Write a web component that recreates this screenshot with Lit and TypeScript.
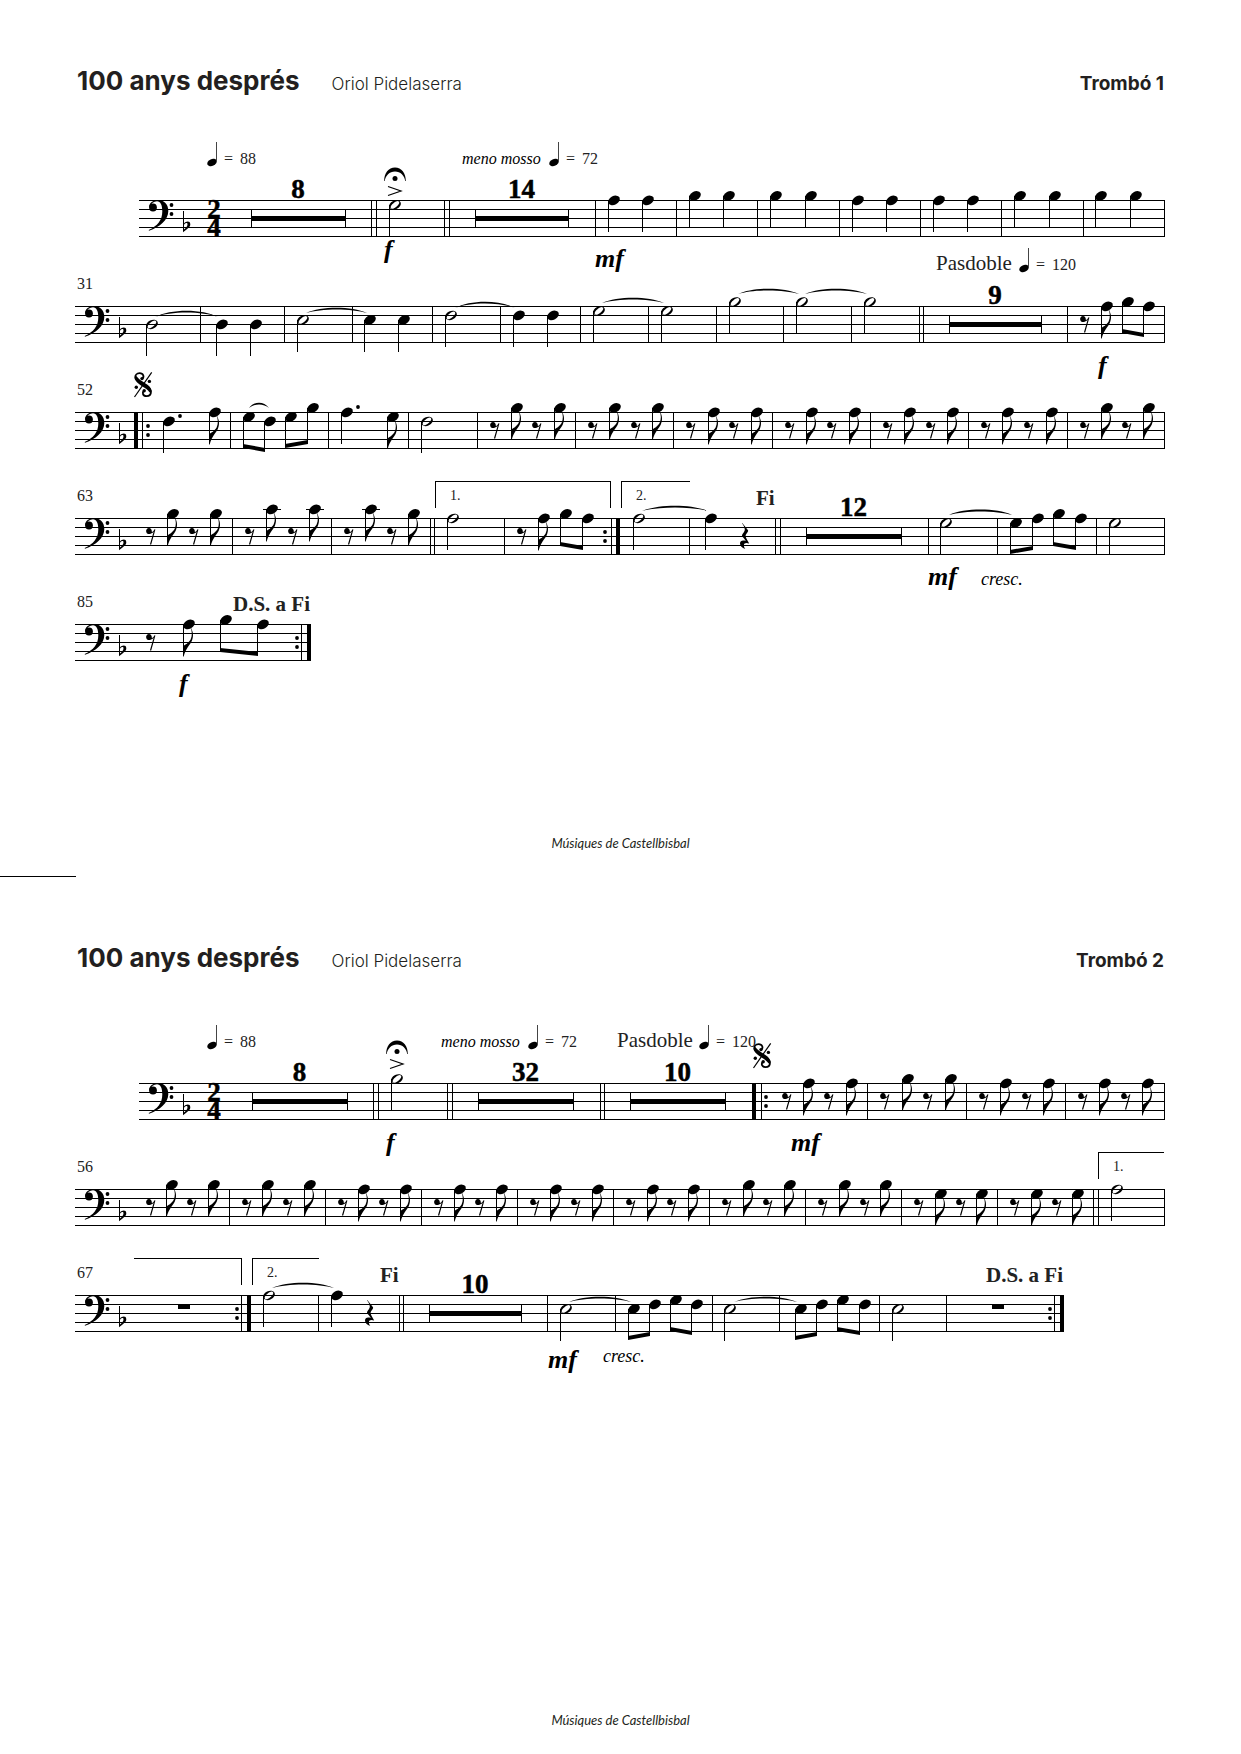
import { LitElement, html, svg, css, nothing } from "lit";
import type { SVGTemplateResult } from "lit";
import { customElement, property } from "lit/decorators.js";

type Mark = SVGTemplateResult | SVGTemplateResult[];

interface Stave {
  label: string;
  start: number;
  end: number;
  number?: string;
  marks: Mark[];
}

interface Part {
  name: string;
  roomy: boolean;
  staves: Stave[];
}

/* Staff geometry: the top line is at y = 0, lines are 9 apart.
   A pitch is counted in half spaces below the top line (bass clef). */
const GAP = 9;
const PITCH: Record<string, number> = { C: -2, B: -1, A: 0, G: 1, F: 2, E: 3, D: 4 };
const headY = (p: string) => (PITCH[p] * GAP) / 2 + 0.4;

const line = (x: number, y: number, w: number, h: number) =>
  svg`<rect class="crisp" x=${x} y=${y} width=${w} height=${h}></rect>`;
const text = (x: number, y: number, kind: string, value: string) =>
  svg`<text class=${kind} x=${x} y=${y}>${value}</text>`;

const solid = (x: number, y: number) =>
  svg`<ellipse rx="6.2" ry="4.3" transform="translate(${x} ${y}) rotate(-28)"></ellipse>`;
const hollow = (x: number, y: number) =>
  svg`<g transform="translate(${x} ${y})"><path fill-rule="evenodd" transform="rotate(-26)"
    d="M-6.2 0A6.2 4.3 0 1 0 6.2 0A6.2 4.3 0 1 0 -6.2 0ZM-5 1.2C-5.5 -0.4 -2.6 -1.7 0 -2.3C2.6 -2.9 4.7 -2.7 5 -1.2C5.4 0.4 2.6 1.7 0 2.3C-2.6 2.9 -4.7 2.7 -5 1.2Z"></path></g>`;

const stem = (x: number, y: number, to: number) => line(x, Math.round(y), 1, Math.round(to - y));

const q = (x: number, p: string): Mark => {
  const y = headY(p);
  return [stem(x, y, y + 32), solid(x + 6, y)];
};
const h = (x: number, p: string): Mark => {
  const y = headY(p);
  return [stem(x, y, y + 32), hollow(x + 6, y)];
};
const e = (x: number, p: string): Mark => {
  const y = headY(p);
  return [
    stem(x, y, y + 29),
    solid(x + 6, y),
    p === "C" ? line(x - 3, -GAP, 18, 1) : svg``,
    svg`<path transform="translate(${x} ${y + 32})"
      d="M0 0V-11H1C2 -11.5 5.5 -13.5 7.6 -17C9.4 -21 9.2 -25 7.4 -29.5C10.6 -24.5 10.6 -20 8.8 -15.5C7 -11.5 2.5 -8 0.7 0Z"></path>`,
  ];
};
const er = (x: number): Mark =>
  svg`<path transform="translate(${x} 0)"
    d="M3 10.1A3 3 0 1 0 4.6 15.7C6 15.4 7 14.6 7.6 13.8L3.9 26.4H5.2L9.4 11.6L8.5 11.3C7.8 12.9 6.8 14 5.9 14C5.9 11.6 4.6 10.1 3 10.1Z"></path>`;
const qr = (x: number): Mark =>
  svg`<path transform="translate(${x} 0)"
    d="M2.3 5L8 12.2C8.8 13.8 5.4 16 5.6 18C5.8 20.3 7.8 22.5 9.2 25.6C6.3 24.4 3.9 25 3.9 27.3C3.9 29 4.5 30 5.3 31C2 29.8 0 28 0 25.5C0 22.8 2.5 22 5.8 23C4.5 20.5 2 18.7 2 17.7C2 16 5 13.5 4.8 11.5C4.6 9.5 3.5 7 2 5.3Z"></path>`;
const wr = (x: number): Mark => line(x, 9, 12, 5);

const beam = (x1: number, p1: string, x2: number, p2: string, y1: number, y2: number): Mark => [
  stem(x1, headY(p1), y1 + 2),
  stem(x2, headY(p2), y2 + 2),
  solid(x1 + 6, headY(p1)),
  solid(x2 + 6, headY(p2)),
  svg`<polygon points="${x1},${y1} ${x2 + 1},${y2} ${x2 + 1},${y2 + 4} ${x1},${y1 + 4}"></polygon>`,
];
const tie = (x1: number, x2: number, y: number, peak: number): Mark => {
  const c = y + (peak - y) / 0.75 - 0.5;
  const d = (x2 - x1) * 0.25;
  return svg`<path d="M${x1} ${y}C${x1 + d} ${c} ${x2 - d} ${c} ${x2} ${y}C${x2 - d} ${c + 2.4} ${x1 + d} ${c + 2.4} ${x1} ${y}Z"></path>`;
};
const bar = (...xs: number[]): Mark => xs.map((x) => line(x, 0, 1, 4 * GAP + 1));
const thick = (x: number): Mark => line(x, 0, 4, 4 * GAP + 1);
const dot = (x: number, y: number) => svg`<circle cx=${x} cy=${y} r="1.9"></circle>`;
const dots = (x: number): Mark => [dot(x, 14), dot(x, 23)];
const multi = (x1: number, x2: number, n: string): Mark => [
  line(x1, 9, 1, 19),
  line(x2, 9, 1, 19),
  line(x1, 16, x2 - x1 + 1, 5),
  text((x1 + x2) / 2, -2, "count", n),
];
const tempo = (x: number, bpm: string): Mark => [
  svg`<ellipse rx="5" ry="3.4" transform="translate(${x - 4} -37.5) rotate(-25)"></ellipse>`,
  svg`<rect x=${x} y="-58" width="1" height="20" fill="#444"></rect>`,
  text(x + 8, -36, "tempo", "="),
  text(x + 24, -36, "tempo", bpm),
];
const fermata = (x: number, y: number): Mark => [
  svg`<path transform="translate(${x} ${y})"
    d="M-10.8 0C-10.8 -8 -6.5 -13.4 0 -13.4S10.8 -8 10.8 0H10.2C9.6 -5.5 5.5 -9.6 0 -9.6S-9.6 -5.5 -10.2 0Z"></path>`,
  svg`<circle cx=${x} cy=${y - 2.4} r="2.5"></circle>`,
  svg`<path class="thin" d="M${x - 7} ${y + 5.5}L${x + 6} ${y + 10}L${x - 7} ${y + 14.5}"></path>`,
];
const segno = (x: number): Mark =>
  svg`<g transform="translate(${x} -40)">
    <path class="segno" d="M8.2 6.5C10.5 5 9.5 1.2 5.6 1.2C2.6 1.2 1.2 3.2 1.2 5.5C1.2 11 17 13.5 17 19.5C17 22.5 15 24.2 12.5 24.2C8.8 24.2 7.8 20.5 10 18.8"></path>
    <path d="M0.8 6C1.5 12.5 12.5 15 15.6 20.5L17.6 19C17.2 12 6 10 2.4 4Z"></path>
    <circle cx="8" cy="6.6" r="1.7"></circle><circle cx="10.2" cy="18.7" r="1.7"></circle>
    <circle cx="2.3" cy="15.2" r="1.7"></circle><circle cx="15.4" cy="9.4" r="1.7"></circle>
    <path class="thin" d="M0.5 25L17.7 0.3"></path>
  </g>`;
const volta = (x1: number, x2: number, left: boolean, right: boolean, n = ""): Mark => [
  line(x1, -37, x2 - x1 + 1, 1),
  left ? line(x1, -37, 1, 27) : svg``,
  right ? line(x2, -37, 1, 27) : svg``,
  n ? text(x1 + 15, -18, "ending", n) : svg``,
];

/* A bar of off-beat eighths: rest, note, rest, note. */
const off = (r1: number, n1: number, r2: number, n2: number, p1: string, p2 = p1): Mark =>
  [er(r1), e(n1, p1), er(r2), e(n2, p2)].flat();

const clef = (x: number): Mark =>
  svg`<g transform="translate(${x} 0)">
    <circle cx="5" cy="7.5" r="3.9"></circle>
    <path d="M1.1 7.5C1.1 2.8 5 0 10 0C16 0 20.3 4 20.3 11C20.3 20 12 27 1 30.8L0.7 30C9.5 26 14.3 20 14.3 11.5C14.3 5 12.5 1.3 9 1.3C5.5 1.3 3.2 3.5 2.3 6.5Z"></path>
    <circle cx="23.5" cy="5" r="1.9"></circle><circle cx="23.5" cy="14" r="1.9"></circle>
    <path fill-rule="evenodd" d="M35 11H36V23.5C38 21 42.3 20.7 42.3 24.2C42.3 27.5 38.5 29 35 32.3ZM36 24.8V29.6C38 28 39.5 26.3 39.5 24.3C39.5 22.3 37.3 22.8 36 24.8Z"></path>
  </g>`;
const meter = (x: number): Mark =>
  svg`<text class="count"><tspan x=${x} y="18">2</tspan><tspan x=${x} y="36">4</tspan></text>`;

const trombone1: Stave[] = [
  {
    label: "Compassos 1 a 30", start: 139, end: 1164,
    marks: [
      meter(214), tempo(216, "88"), multi(251, 345, "8"), bar(371, 376),
      h(389, "G"), fermata(395, -19), text(384, 58, "dynamic", "f"), bar(444, 449),
      text(462, -36, "mood", "meno mosso"), tempo(558, "72"), multi(475, 568, "14"), bar(595),
      text(595, 67, "dynamic", "mf"),
      q(608, "A"), q(642, "A"), bar(676), q(689, "B"), q(723, "B"), bar(757),
      q(770, "B"), q(805, "B"), bar(839), q(852, "A"), q(886, "A"), bar(920),
      q(933, "A"), q(967, "A"), bar(1001), q(1014, "B"), q(1049, "B"), bar(1083),
      q(1095, "B"), q(1130, "B"), bar(1164),
    ],
  },
  {
    label: "Compassos 31 a 51", start: 75, end: 1164, number: "31",
    marks: [
      h(146, "D"), tie(155, 218, 11, 5), bar(200), q(216, "D"), q(250, "D"), bar(284),
      h(297, "E"), tie(306, 367, 7, 2), bar(352), q(364, "E"), q(398, "E"), bar(432),
      h(445, "F"), tie(455, 515, 2, -4), bar(500), q(513, "F"), q(547, "F"), bar(580),
      h(593, "G"), tie(602, 664, -3, -8), bar(648), h(661, "G"), bar(716),
      h(729, "B"), tie(738, 799, -12, -17), bar(783), h(796, "B"), tie(805, 867, -12, -17), bar(851),
      h(864, "B"), bar(919, 923), text(936, -36, "style", "Pasdoble"), tempo(1028, "120"),
      multi(949, 1041, "9"), bar(1067), er(1080), e(1101, "A"),
      beam(1122, "B", 1143, "A", 23, 27), text(1098, 68, "dynamic", "f"), bar(1164),
    ],
  },
  {
    label: "Compassos 52 a 62", start: 75, end: 1164, number: "52",
    marks: [
      segno(134), thick(134), bar(142), dots(148),
      q(163, "F"), dot(180, 4), e(209, "A"), bar(230),
      beam(243, "G", 264, "F", 32, 36), tie(249, 269, -4, -9), beam(285, "G", 307, "B", 32, 28), bar(328),
      q(341, "A"), dot(358, -5), e(387, "G"), bar(408), h(421, "F"), bar(477),
      off(490, 511, 532, 554, "B"), bar(575), off(588, 609, 631, 652, "B"), bar(673),
      off(686, 708, 729, 751, "A"), bar(772), off(785, 806, 827, 849, "A"), bar(870),
      off(883, 904, 926, 947, "A"), bar(968), off(981, 1002, 1024, 1046, "A"), bar(1067),
      off(1080, 1101, 1122, 1143, "B"), bar(1164),
    ],
  },
  {
    label: "Compassos 63 a 84", start: 75, end: 1164, number: "63",
    marks: [
      off(146, 167, 189, 210, "B"), bar(232), off(245, 266, 288, 309, "C"), bar(331),
      off(344, 365, 387, 408, "C", "B"), bar(430, 434), volta(435, 610, true, true, "1."),
      h(447, "A"), bar(504), er(517), e(538, "A"), beam(560, "B", 582, "A", 24, 28),
      dots(605), bar(611), thick(616), volta(621, 689, true, false, "2."),
      h(633, "A"), tie(642, 708, -7, -12), bar(689), q(705, "A"), qr(740),
      text(756, -13, "direction", "Fi"), bar(775, 780), multi(806, 901, "12"), bar(928),
      h(940, "G"), tie(949, 1012, -3, -8), text(928, 67, "dynamic", "mf"), bar(997),
      text(981, 67, "mood large", "cresc."),
      beam(1010, "G", 1032, "A", 32, 28), beam(1053, "B", 1075, "A", 24, 28), bar(1096),
      h(1109, "G"), bar(1164),
    ],
  },
  {
    label: "Compàs 85", start: 75, end: 310, number: "85",
    marks: [
      er(146), e(183, "A"), beam(220, "B", 257, "A", 24, 28), text(179, 68, "dynamic", "f"),
      dots(297), bar(301), thick(307), text(233, -13, "direction", "D.S. a Fi"),
    ],
  },
];

const trombone2: Stave[] = [
  {
    label: "Compassos 1 a 55", start: 139, end: 1164,
    marks: [
      meter(214), tempo(216, "88"), multi(252, 347, "8"), bar(373, 378),
      h(391, "B"), fermata(397, -29), text(386, 68, "dynamic", "f"), bar(447, 452),
      text(441, -36, "mood", "meno mosso"), tempo(537, "72"), multi(478, 573, "32"), bar(600, 604),
      text(617, -36, "style", "Pasdoble"), tempo(708, "120"), multi(630, 725, "10"),
      segno(753), thick(752), bar(761), dots(766), text(791, 68, "dynamic", "mf"),
      off(782, 803, 824, 846, "A"), bar(867), off(880, 902, 923, 945, "B"), bar(966),
      off(979, 1000, 1022, 1043, "A"), bar(1065), off(1078, 1099, 1121, 1142, "A"), bar(1164),
    ],
  },
  {
    label: "Compassos 56 a 66", start: 75, end: 1164, number: "56",
    marks: [
      off(146, 166, 187, 208, "B"), bar(229), off(242, 262, 283, 304, "B"), bar(325),
      off(338, 358, 379, 400, "A"), bar(421), off(434, 454, 475, 496, "A"), bar(517),
      off(530, 550, 571, 592, "A"), bar(613), off(626, 647, 667, 688, "A"), bar(709),
      off(722, 743, 763, 784, "B"), bar(805), off(818, 839, 860, 880, "B"), bar(901),
      off(914, 935, 956, 976, "G"), bar(997), off(1010, 1031, 1052, 1072, "G"), bar(1093, 1098),
      volta(1098, 1163, true, false, "1."), h(1111, "A"), bar(1164),
    ],
  },
  {
    label: "Compassos 67 a 87", start: 75, end: 1063, number: "67",
    marks: [
      volta(134, 241, false, true), wr(178), dots(237), bar(241), thick(247),
      volta(252, 318, true, false, "2."), h(263, "A"), tie(272, 334, -7, -12), bar(318),
      q(331, "A"), qr(365), text(380, -13, "direction", "Fi"), bar(399, 403),
      multi(429, 521, "10"), bar(547), h(560, "E"), tie(569, 631, 7, 2),
      text(548, 73, "dynamic", "mf"), text(603, 67, "mood large", "cresc."), bar(615),
      beam(628, "E", 649, "F", 41, 37), beam(670, "G", 691, "F", 32, 36), bar(712),
      h(724, "E"), tie(734, 797, 7, 2), bar(779),
      beam(795, "E", 816, "F", 41, 37), beam(837, "G", 859, "F", 32, 36), bar(879),
      h(892, "E"), bar(946), wr(992), dots(1050), bar(1054), thick(1060),
      text(986, -13, "direction", "D.S. a Fi"),
    ],
  },
];

const parts: Part[] = [
  { name: "Trombó 1", roomy: false, staves: trombone1 },
  { name: "Trombó 2", roomy: true, staves: trombone2 },
];

@customElement("score-stave")
export class ScoreStave extends LitElement {
  @property({ attribute: false }) stave!: Stave;

  static styles = css`
    :host { display: block; }
    .stave { display: block; width: 100%; height: auto; overflow: visible; fill: #000; }
    .crisp { shape-rendering: crispEdges; }
    .thin { fill: none; stroke: #000; stroke-width: 1.2; }
    .segno { fill: none; stroke: #000; stroke-width: 1.8; }
    text { font-family: "Liberation Serif", "Times New Roman", serif; }
    .tempo, .number, .mood { font-size: 16px; }
    .tempo, .number, .ending, .style { fill: #222; }
    .mood, .dynamic { font-style: italic; }
    .large { font-size: 18px; }
    .ending { font-size: 14px; }
    .style, .direction { font-size: 21px; }
    .direction { font-weight: 700; fill: #222; }
    .dynamic { font-size: 26px; font-weight: 700; }
    .count { font-size: 27px; font-weight: 700; text-anchor: middle; stroke: #000; stroke-width: 0.5; }
  `;

  render() {
    const { label, start, end, number, marks } = this.stave;
    return html`<svg class="stave" viewBox="0 -62 1241 106" role="img" aria-label=${label}>
      ${[0, 1, 2, 3, 4].map((i) => line(start, i * GAP, end - start + 1, 1))}
      ${clef(start + 9)}
      ${number ? text(77, -17, "number", number) : nothing}
      ${marks}
    </svg>`;
  }
}

@customElement("score-page")
export class ScorePage extends LitElement {
  @property({ attribute: false }) part!: Part;

  static styles = css`
    :host { display: flex; flex-direction: column; box-sizing: border-box; min-height: 50vh; }
    .head {
      display: flex; align-items: baseline; gap: 32px; box-sizing: border-box; height: 101px;
      padding: 64px 77px 0; line-height: 34px; color: #231f20;
      font-family: Inter, "Liberation Sans", sans-serif;
    }
    .title, .part { margin: 0; font-weight: 700; }
    .title { font-size: 26px; }
    .composer { margin: 0; font-size: 17px; font-weight: 300; }
    .part { margin-left: auto; font-size: 19px; }
    .staves { display: flex; flex-direction: column; padding-top: 37px; }
    .roomy { padding-top: 43px; }
    .foot {
      margin-top: auto; padding-bottom: 26px; text-align: center; line-height: 16px; color: #231f20;
      font-family: Lato, "Liberation Sans", sans-serif; font-size: 13px; font-style: italic;
    }
  `;

  render() {
    return html`
      <header class="head">
        <h1 class="title">100 anys després</h1>
        <p class="composer">Oriol Pidelaserra</p>
        <h2 class="part">${this.part.name}</h2>
      </header>
      <main class=${this.part.roomy ? "staves roomy" : "staves"}>
        ${this.part.staves.map((s) => html`<score-stave .stave=${s}></score-stave>`)}
      </main>
      <footer class="foot">Músiques de Castellbisbal</footer>
    `;
  }
}

@customElement("app-root")
export class AppRoot extends LitElement {
  static styles = css`
    :host { display: block; min-height: 100vh; background: #fff; }
    .cut { width: 76px; height: 1px; margin: -1px 0 0; border: 0; background: #000; }
  `;

  render() {
    return parts.map((part, i) => html`${i ? html`<hr class="cut">` : nothing}<score-page .part=${part}></score-page>`);
  }
}
